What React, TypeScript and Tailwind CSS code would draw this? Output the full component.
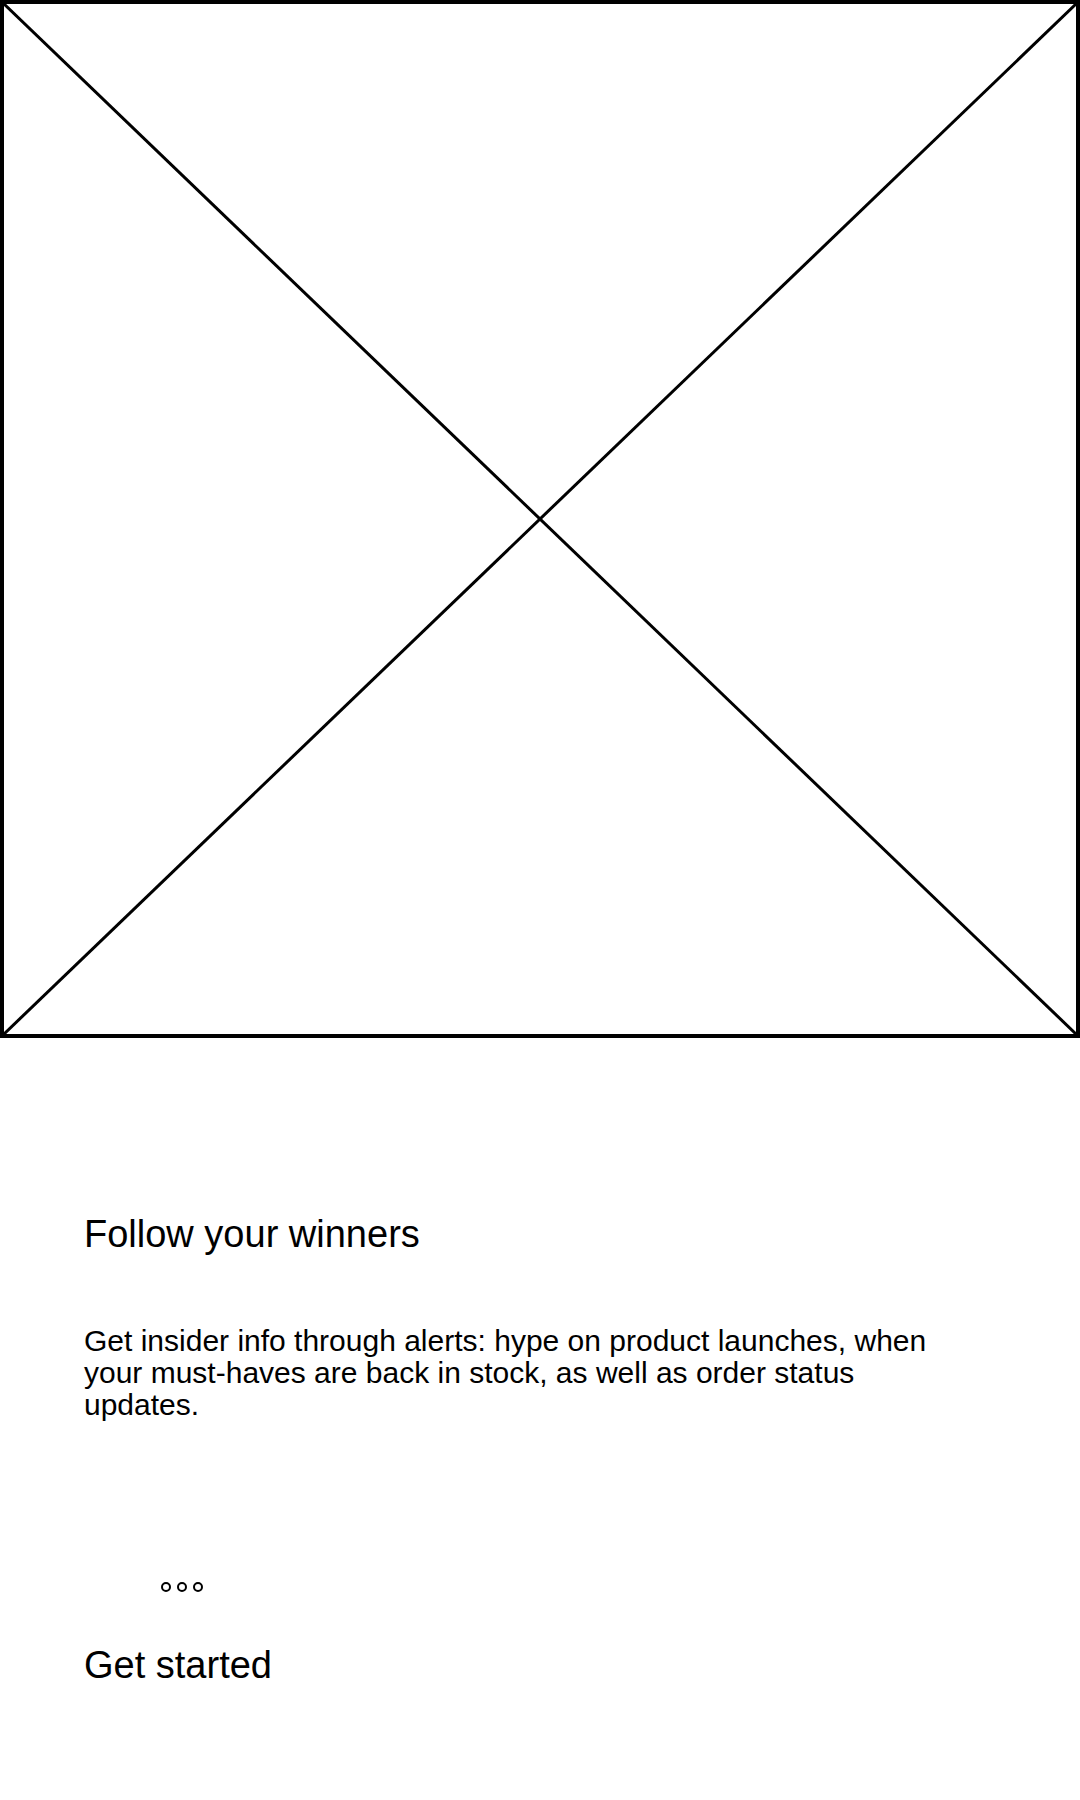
export default function App() {
  return (
    <div className="w-[1080px] h-[1800px] bg-white text-black" style={{ fontFamily: '"Liberation Sans", Arial, sans-serif' }}>
      {/* image placeholder */}
      <div className="relative h-[1038px] w-full border-[4px] border-black">
        <svg className="absolute inset-0 h-full w-full" viewBox="0 0 100 100" preserveAspectRatio="none" aria-hidden>
          <line x1="0" y1="0" x2="100" y2="100" stroke="black" strokeWidth="3" vectorEffect="non-scaling-stroke" />
          <line x1="100" y1="0" x2="0" y2="100" stroke="black" strokeWidth="3" vectorEffect="non-scaling-stroke" />
        </svg>
      </div>

      <div className="pl-[84px] pr-[126px]">
        <h1 className="mt-[174px] text-[38px] leading-[44px] font-normal">Follow your winners</h1>
        <p className="mt-[69px] text-[30px] leading-[32px]">
          Get insider info through alerts: hype on product launches, when your must-haves are back in stock, as well as order status updates.
        </p>

        {/* pager dots */}
        <div className="mt-[161px] ml-[77px] flex gap-[6px]">
          <span className="h-[10px] w-[10px] rounded-full border-[2.5px] border-black" />
          <span className="h-[10px] w-[10px] rounded-full border-[2.5px] border-black" />
          <span className="h-[10px] w-[10px] rounded-full border-[2.5px] border-black" />
        </div>

        <button className="mt-[51px] block text-left text-[38px] leading-[44px]">Get started</button>
      </div>
    </div>
  )
}
